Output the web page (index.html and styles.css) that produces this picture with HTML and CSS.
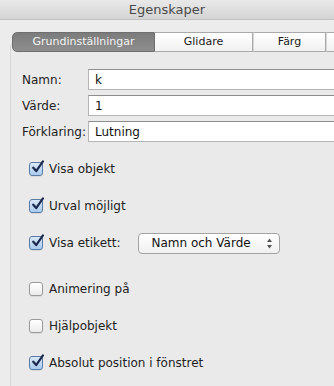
FILE: index.html
```html
<!DOCTYPE html>
<html lang="sv">
<head>
  <meta charset="UTF-8" />
  <title>Egenskaper</title>
  <link rel="stylesheet" href="styles.css">
</head>
<body>

<div class="titlebar">Egenskaper</div>

<div class="tabview">
  <div class="tabs">
    <div class="tab active">Grundinställningar</div>
    <div class="tab tab-glidare">Glidare</div>
    <div class="tab tab-farg">Färg</div>
    <div class="tab tab-more"></div>
  </div>

  <div class="panel">
    <div class="fields">
      <div class="field">
        <label>Namn:</label>
        <div class="input">k</div>
      </div>
      <div class="field">
        <label>Värde:</label>
        <div class="input">1</div>
      </div>
      <div class="field">
        <label>Förklaring:</label>
        <div class="input">Lutning</div>
      </div>
    </div>

    <div class="options">
      <div class="option">
        <span class="check on"><svg viewBox="0 0 16 16"><path d="M3.5 8.2 L6.6 11.8 L13.8 1.5" /></svg></span>
        Visa objekt
      </div>
      <div class="option">
        <span class="check on"><svg viewBox="0 0 16 16"><path d="M3.5 8.2 L6.6 11.8 L13.8 1.5" /></svg></span>
        Urval möjligt
      </div>
      <div class="option option-label">
        <span class="check on"><svg viewBox="0 0 16 16"><path d="M3.5 8.2 L6.6 11.8 L13.8 1.5" /></svg></span>
        Visa etikett:
        <div class="select">
          Namn och Värde
          <svg class="arrows" viewBox="0 0 7 11"><path d="M3.5 0.5 L6 4 L1 4 Z M3.5 10.5 L6 7 L1 7 Z" /></svg>
        </div>
      </div>
      <div class="option">
        <span class="check"></span>
        Animering på
      </div>
      <div class="option">
        <span class="check"></span>
        Hjälpobjekt
      </div>
      <div class="option">
        <span class="check on"><svg viewBox="0 0 16 16"><path d="M3.5 8.2 L6.6 11.8 L13.8 1.5" /></svg></span>
        Absolut position i fönstret
      </div>
    </div>
  </div>
</div>

</body>
</html>
```

FILE: styles.css
```css
body {
  margin: 0;
  padding: 0;
  font-family: 'DejaVu Sans', sans-serif;
  font-size: 12px;
  background: #ececec;
  color: #222;
  overflow: hidden;
}

/* Window title */
.titlebar {
  height: 20px;
  line-height: 20px;
  text-align: center;
  font-size: 13px;
  color: #4a4a4a;
  background: linear-gradient(#e9e9e9, #d4d4d4);
  border-bottom: 1px solid #c2c2c2;
  box-sizing: border-box;
}

/* Tab view */
.tabview {
  margin: 12px 0 0 10px;
}

.tabs {
  display: flex;
  margin-left: 2px;
  height: 20px;
  position: relative;
  z-index: 1;
  font-size: 11px;
}

.tab {
  box-sizing: border-box;
  height: 20px;
  line-height: 18px;
  text-align: center;
  background: linear-gradient(#ffffff, #f1f1f1);
  border: 1px solid #a9a9a9;
  border-left: 1px solid #d6d6d6;
  color: #1a1a1a;
}

.tab.active {
  width: 143px;
  color: #f4f4f4;
  background: linear-gradient(#7c7c7c, #8e8e8e);
  border: 1px solid #6e6e6e;
  border-radius: 5px 0 0 5px;
}

.tab-glidare {
  width: 98px;
  border-left: none;
}

.tab-farg {
  width: 73px;
}

.tab-more {
  flex: 1;
  border-right: none;
}

.panel {
  margin-top: -10px;
  padding: 26px 0 0 11px;
  border-left: 1px solid #d6d6d6;
  border-top: 1px solid #d6d6d6;
  border-radius: 5px 0 0 0;
  background: #eaeaea;
  height: 360px;
  box-sizing: border-box;
}

/* Text fields */
.fields {
  display: flex;
  flex-direction: column;
  gap: 5px;
}

.field {
  display: flex;
  align-items: center;
  height: 21px;
}

.field label {
  width: 66px;
}

.input {
  flex: 1;
  height: 21px;
  line-height: 20px;
  box-sizing: border-box;
  padding-left: 6px;
  margin-right: -10px;
  background: #fff;
  border: 1px solid #b5b5b5;
  border-top-color: #8e8e8e;
  color: #111;
}

/* Checkbox options */
.options {
  display: flex;
  flex-direction: column;
  gap: 15px;
  margin-top: 16px;
  padding-left: 7px;
}

.option {
  display: flex;
  align-items: center;
  height: 22px;
  gap: 6px;
}

.option-label {
  margin-bottom: 9px;
}

.check {
  position: relative;
  width: 14px;
  height: 14px;
  box-sizing: border-box;
  border: 1px solid #9a9a9a;
  border-radius: 3px;
  background: linear-gradient(#ffffff, #ececec);
  box-shadow: 0 1px 1px rgba(0, 0, 0, 0.08);
}

.check.on {
  border-color: #5a7ba6;
  background: linear-gradient(#dbe9f8, #a9cbee);
}

.check svg {
  position: absolute;
  left: 0;
  top: -3px;
  width: 15px;
  height: 15px;
  fill: none;
  stroke: #1b2a4e;
  stroke-width: 2.4;
  stroke-linecap: round;
  stroke-linejoin: round;
}

.select {
  position: relative;
  margin-left: 12px;
  width: 142px;
  height: 21px;
  line-height: 19px;
  box-sizing: border-box;
  padding-left: 12px;
  border: 1px solid #a3a3a3;
  border-radius: 4px;
  background: linear-gradient(#ffffff, #f0f0f0);
  color: #111;
}

.select .arrows {
  position: absolute;
  right: 6px;
  top: 4px;
  width: 7px;
  height: 11px;
  fill: #555;
}
```
